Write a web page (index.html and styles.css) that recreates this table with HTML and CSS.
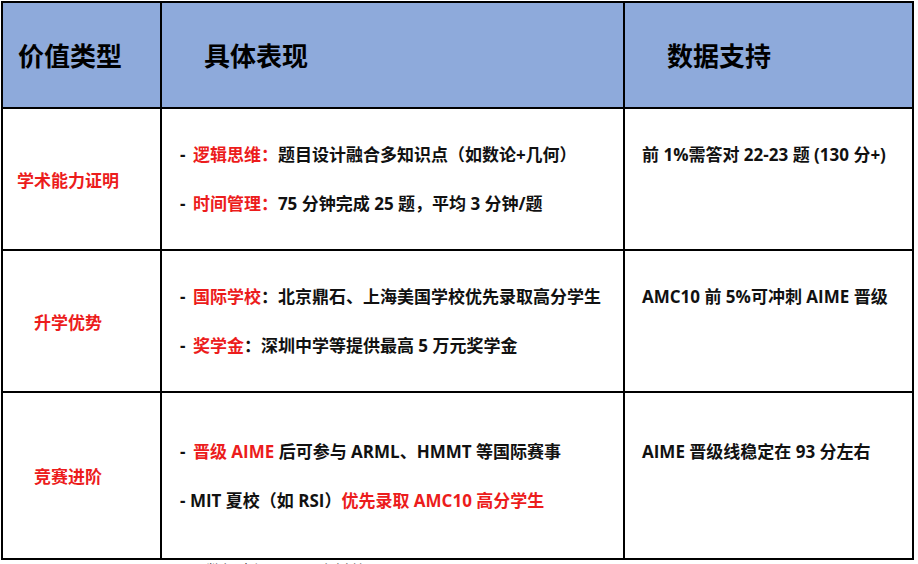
FILE: index.html
```html
<!DOCTYPE html>
<html lang="zh-CN">
<head>
<meta charset="utf-8">
<title>价值类型</title>
<link rel="stylesheet" href="styles.css">
</head>
<body>
<div class="page">
  <div class="grid" role="table">
    <div class="cell head h1" role="columnheader">价值类型</div>
    <div class="cell head h2" role="columnheader">具体表现</div>
    <div class="cell head h3" role="columnheader">数据支持</div>

    <div class="cell type">学术能力证明</div>
    <div class="cell detail">
      <p class="ln">- <span class="red lead">逻辑思维：</span>题目设计融合多知识点（如数论+几何）</p>
      <p class="ln">- <span class="red lead">时间管理：</span>75 分钟完成 25 题，平均 3 分钟/题</p>
    </div>
    <div class="cell data">
      <p class="ln">前 1%需答对 22-23 题 (130 分+)</p>
      <p class="ln"></p>
    </div>

    <div class="cell type">升学优势</div>
    <div class="cell detail">
      <p class="ln">- <span class="red lead">国际学校</span>：北京鼎石、上海美国学校优先录取高分学生</p>
      <p class="ln">- <span class="red lead">奖学金</span>：深圳中学等提供最高 5 万元奖学金</p>
    </div>
    <div class="cell data">
      <p class="ln">AMC10 前 5%可冲刺 AIME 晋级</p>
      <p class="ln"></p>
    </div>

    <div class="cell type">竞赛进阶</div>
    <div class="cell detail">
      <p class="ln">- <span class="red lead">晋级 AIME</span> 后可参与 ARML、HMMT 等国际赛事</p>
      <p class="ln">- MIT 夏校（如 RSI）<span class="red">优先录取 AMC10 高分学生</span></p>
    </div>
    <div class="cell data">
      <p class="ln">AIME 晋级线稳定在 93 分左右</p>
      <p class="ln"></p>
    </div>
  </div>
  <p class="note">数据来源：公开资料整理</p>
</div>
</body>
</html>
```

FILE: styles.css
```css
html, body {
  margin: 0;
  padding: 0;
  background: #ffffff;
  overflow: hidden;
}

body {
  font-family: "Open Sans", "Noto Sans CJK SC", sans-serif;
  font-weight: 700;
  color: #111111;
  text-spacing-trim: space-all;
}

.page {
  padding: 1px 0 0 1px;
}

.grid {
  display: grid;
  grid-template-columns: 159px 463px 289px;
  grid-template-rows: 106px 142px 142px 167px;
  width: 911px;
  border-top: 2px solid #000;
  border-left: 2px solid #000;
}

.cell {
  box-sizing: border-box;
  border-right: 2px solid #000;
  border-bottom: 2px solid #000;
  display: flex;
  flex-direction: column;
  justify-content: center;
  font-size: 17px;
}

.head {
  background: #8eaadb;
  font-size: 26px;
  color: #000;
}

.h1 { padding-left: 15px; }
.h2 { padding-left: 42px; }
.h3 { padding-left: 42px; }

.type {
  color: #ec1c1c;
  text-align: center;
  padding-right: 27px;
}

.detail {
  padding-left: 18px;
}

.data {
  padding-left: 17px;
}

.ln {
  margin: 0;
  line-height: 49px;
  height: 49px;
  white-space: nowrap;
}

.red {
  color: #ec1c1c;
}

.lead {
  margin-left: 3px;
}

.note {
  margin: 0;
  padding-left: 205px;
  font-size: 16px;
  line-height: 22px;
  color: #555;
  font-weight: 400;
}
```
